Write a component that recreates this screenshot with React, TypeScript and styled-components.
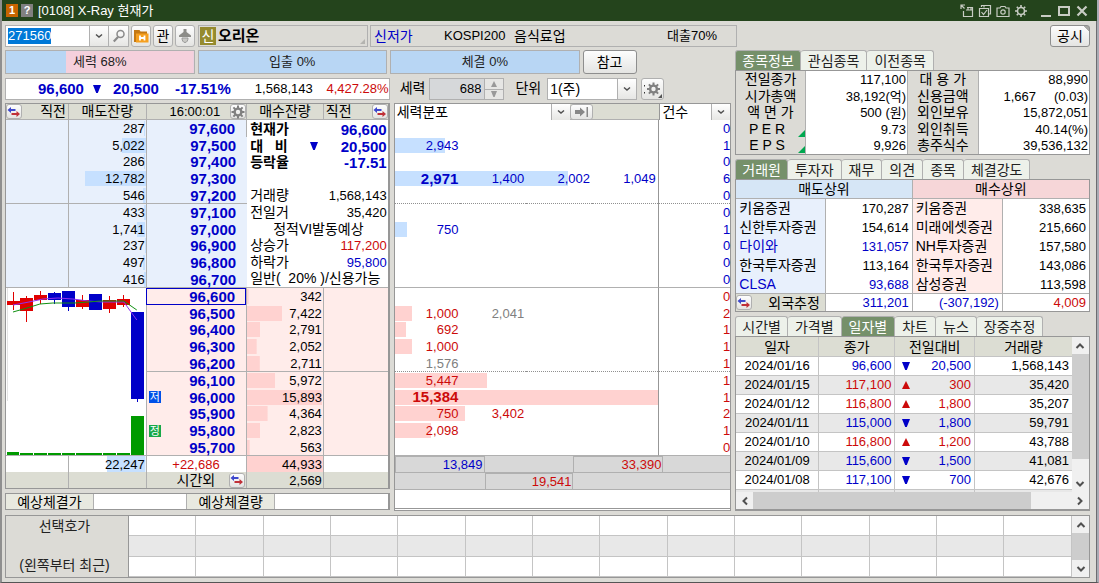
import React, { useEffect, useRef } from 'react';
import styled, { createGlobalStyle, css } from 'styled-components';

const c = {
  title: '#24441c',
  bg: '#dcdbd6',
  head: '#dcddd3',
  line: '#b0b0b0',
  edge: '#979797',
  blue: '#0000c8',
  red: '#cc0a0a',
  gray: '#808080',
  sell: '#e8f0fc',
  sellBar: '#c6e0ff',
  buy: '#ffecea',
  buyBar: '#ffd2d0',
  tab: '#75906a',
};

type Tone = 'blue' | 'red' | 'gray' | 'black';
const toneOf = (t?: Tone) => (t === 'blue' ? c.blue : t === 'red' ? c.red : t === 'gray' ? c.gray : '#000');

const Global = createGlobalStyle`
  * { box-sizing: border-box; }
  body { margin: 0; background: ${c.bg}; }
  body, button, input, select, table {
    font-family: "Liberation Sans", "Noto Sans CJK KR", sans-serif;
    font-size: 13px;
    line-height: 16px;
    color: #000;
  }
  button, input, select { margin: 0; padding: 0; }
`;

/* ---------- window ---------- */
const Window = styled.div`
  min-height: 100vh;
  min-width: 1000px;
  display: flex;
  flex-direction: column;
  background: ${c.bg};
  border-left: 2px solid #8f8f8f;
  border-right: 2px solid #a9abb4;
  border-bottom: 1px solid #555;
`;
const TitleBar = styled.header`
  display: flex;
  align-items: center;
  height: 21px;
  padding: 0 8px 0 4px;
  gap: 3px;
  background: ${c.title};
  color: #fff;
`;
const TitleBadge = styled.span<{ $bg: string }>`
  width: 12px;
  height: 13px;
  background: ${p => p.$bg};
  color: #fff;
  font-weight: bold;
  font-size: 11px;
  line-height: 13px;
  text-align: center;
`;
const TitleText = styled.h1`
  margin: 0 auto 0 2px;
  font-size: 13px;
  font-weight: normal;
`;
const TitleButton = styled.button`
  display: flex;
  align-items: center;
  justify-content: center;
  width: 15px;
  height: 16px;
  border: 0;
  background: none;
  color: #c8ccc4;
`;
const TitleGap = styled.span`
  width: 4px;
`;
const Body = styled.main`
  flex: 1;
  display: flex;
  flex-direction: column;
  padding: 4px 6px 3px 3px;
  border-right: 1px solid #6c6c70;
`;
const face = css`
  border: 1px solid ${c.line};
  background: linear-gradient(#fdfdfd, #e4e4e2);
  border-radius: 3px;
`;
const ToolBar = styled.div`
  display: flex;
  gap: 2px;
  height: 22px;
  margin-bottom: 3px;
`;
const FieldBox = styled.div<{ $w: number }>`
  display: flex;
  width: ${p => p.$w}px;
  border: 1px solid ${c.line};
  background: #fff;
`;
const CodeInput = styled.input`
  flex: 1;
  min-width: 0;
  border: 0;
  padding-left: 2px;
  outline: none;
  font-size: 13px;
  caret-color: #f08020;
  &::selection { background: #0078d7; color: #fff; }
`;
const FieldEnd = styled.button<{ $w?: number }>`
  display: flex;
  align-items: center;
  justify-content: center;
  width: ${p => p.$w ?? 19}px;
  border: 0;
  border-left: 1px solid ${c.line};
  background: linear-gradient(#fff, #e6e6e4);
`;
const ToolButton = styled.button<{ $wide?: boolean }>`
  ${face};
  display: flex;
  align-items: center;
  justify-content: center;
  width: ${p => (p.$wide ? 23 : 20)}px;
  font-size: 14px;
`;
const Strip = styled.div<{ $w: number; $first?: boolean }>`
  display: flex;
  align-items: center;
  width: ${p => p.$w}px;
  margin-left: ${p => (p.$first ? 1 : 0)}px;
  border: 1px solid ${c.line};
`;
const Fold = styled.span`
  align-self: flex-end;
  margin: 0 2px 2px 0;
  border-left: 5px solid transparent;
  border-bottom: 5px solid #b4b4b0;
`;
const NewMark = styled.span`
  width: 16px;
  height: 18px;
  margin: 0 2px 0 1px;
  background: #958a2e;
  color: #fff;
  font-size: 14px;
  line-height: 18px;
  text-align: center;
`;
const StockName = styled.strong`
  flex: 1;
  font-size: 15px;
`;
const Ko = styled.span<{ $tone?: Tone }>`
  font-size: 14px;
  color: ${p => toneOf(p.$tone)};
`;
const StripCell = styled.span<{ $w?: number }>`
  padding-left: 3px;
  ${p => (p.$w ? `width: ${p.$w}px;` : 'margin-left: auto; padding-right: 19px;')}
`;
const PushButton = styled.button<{ $w: number; $end?: boolean }>`
  ${face};
  border-color: #8e8e8e;
  width: ${p => p.$w}px;
  font-size: 14px;
  ${p => p.$end && `
    margin-left: auto;
    background: linear-gradient(225deg, #a8a8a4 4px, transparent 4px), linear-gradient(#fdfdfd, #e4e4e2);
  `}
`;

/* ---------- main columns ---------- */
const Columns = styled.div`
  display: grid;
  grid-template-columns: minmax(0, 727fr) minmax(0, 355fr);
  gap: 4px;
`;
const Trading = styled.section`
  display: grid;
  grid-template-columns: minmax(0, 385fr) minmax(0, 338fr);
  grid-template-rows: auto auto 1fr;
  column-gap: 4px;
`;
const GaugeRow = styled.div`
  grid-column: 1 / -1;
  display: grid;
  grid-template-columns: 190fr 190fr 190fr 54px 92fr;
  column-gap: 3px;
  height: 24px;
  margin-bottom: 4px;
`;
const Gauge = styled.div`
  border: 1px solid ${c.line};
  background-color: #b8d6f4;
  background-repeat: no-repeat;
  background-position: right;
  background-image: linear-gradient(#f5d0dc, #f5d0dc);
  line-height: 21px;
  text-align: center;
  color: #222;
`;
const Quote = styled.div`
  display: grid;
  grid-template-columns: 78fr 26fr 49fr 72fr 82fr 76fr;
  align-items: center;
  height: 22px;
  margin-bottom: 3px;
  border: 1px solid ${c.line};
  background: #fff;
  text-align: right;
  white-space: nowrap;
`;
const Num = styled.span<{ $tone?: Tone; $bold?: boolean }>`
  color: ${p => toneOf(p.$tone)};
  ${p => p.$bold && 'font-weight: bold; font-size: 15px;'}
`;
const Center = styled.span`
  display: flex;
  justify-content: center;
`;
const Controls = styled.div`
  display: flex;
  height: 22px;
  padding-left: 6px;
  gap: 4px;
`;
const ControlLabel = styled.label<{ $gap?: boolean }>`
  font-size: 14px;
  line-height: 20px;
  ${p => p.$gap && 'margin: 0 2px 0 7px;'}
`;
const SpinBox = styled.div`
  display: flex;
  width: 75px;
  border: 1px solid ${c.line};
  background: #d6d8da;
`;
const SpinInput = styled.input`
  flex: 1;
  min-width: 0;
  border: 0;
  padding-right: 3px;
  background: none;
  text-align: right;
`;
const SpinButtons = styled.span`
  display: grid;
  width: 19px;
  border-left: 1px solid ${c.line};
`;
const SpinButton = styled.button`
  display: flex;
  align-items: center;
  justify-content: center;
  border: 0;
  background: #e6e6e4;
  & + & { border-top: 1px solid ${c.line}; }
`;
const Select = styled.select`
  flex: 1;
  min-width: 0;
  appearance: none;
  border: 0;
  padding-left: 2px;
  background: #fff;
  font-size: 14px;
`;

/* ---------- order book ---------- */
const BookWrap = styled.div`
  display: flex;
  flex-direction: column;
  justify-content: space-between;
  padding-bottom: 1px;
`;
const Book = styled.table`
  width: 100%;
  table-layout: fixed;
  border-spacing: 0;
  border: 1px solid ${c.edge};
  border-right-width: 2px;
  td, th { padding: 0; font-weight: normal; white-space: nowrap; }
`;
const BookHead = styled.th<{ $align?: string }>`
  height: 16px;
  background: ${c.head};
  border-bottom: 1px solid ${c.line};
  border-right: 1px solid ${c.line};
  font-size: 14px;
  line-height: 15px;
  text-align: ${p => p.$align ?? 'center'};
  &:last-child { border-right: 0; }
`;
const HeadFlex = styled.div`
  display: flex;
  justify-content: space-between;
  align-items: center;
  height: 15px;
  padding: 0 2px 0 0;
`;
const HeadFlexEnd = styled(HeadFlex)`
  padding: 0 0 0 2px;
`;
const HeadFlexTight = styled(HeadFlex)`
  padding: 0;
`;
const Clock = styled.span`
  margin-left: auto;
  padding-right: 10px;
  font-size: 13px;
`;
const MiniButton = styled.button`
  ${face};
  display: flex;
  align-items: center;
  justify-content: center;
  width: 16px;
  height: 15px;
`;
const Cell = styled.td<{ $side?: 'sell' | 'buy'; $h?: number; $end?: boolean }>`
  height: ${p => p.$h ?? 17}px;
  line-height: 15px;
  text-align: right;
  background-color: ${p => (p.$side === 'sell' ? c.sell : c.buy)};
  background-image: ${p =>
    p.$side === 'sell'
      ? `linear-gradient(${c.sellBar}, ${c.sellBar})`
      : `linear-gradient(${c.buyBar}, ${c.buyBar})`};
  background-size: 0 0;
  background-repeat: no-repeat;
  background-position: ${p => (p.$side === 'sell' ? 'right' : 'left')} center;
  border-right: 1px solid ${c.line};
  border-bottom: ${p => (p.$end ? `1px solid ${c.line}` : '0')};
  &:last-child { border-right: 0; }
  && { padding-right: 1px; }
`;
const PriceBox = styled.div<{ $current?: boolean }>`
  display: flex;
  align-items: center;
  height: 15px;
  padding: 0 10px 0 2px;
  color: ${c.blue};
  font-size: 15px;
  font-weight: bold;
  ${p => p.$current && `outline: 1px solid ${c.blue};`}
`;
const Price = styled.span`
  margin-left: auto;
`;
const Mark = styled.span<{ $bg: string }>`
  width: 12px;
  height: 12px;
  background: ${p => p.$bg};
  color: #fff;
  font-size: 11px;
  font-weight: normal;
  line-height: 12px;
  text-align: center;
`;
const SpanCell = styled.td<{ $right?: boolean }>`
  background: #fff;
  vertical-align: top;
  border-bottom: 1px solid ${c.line};
  border-right: ${p => (p.$right ? '0' : `1px solid ${c.line}`)};
  svg { display: block; }
`;
const Info = styled.dl`
  display: grid;
  grid-template-rows: 17px 16px 16px 17px 17px 17px 16px 17px 16px 17px;
  margin: 0;
  padding: 1px 1px 0 3px;
`;
const InfoRow = styled.div<{ $bold?: boolean; $center?: boolean }>`
  display: flex;
  align-items: center;
  justify-content: ${p => (p.$center ? 'center' : 'space-between')};
  font-weight: ${p => (p.$bold ? 'bold' : 'normal')};
  line-height: 15px;
  dt { font-size: 14px; white-space: pre; }
  dd { margin: 0; font-size: ${p => (p.$bold ? 15 : 13)}px; }
`;
const FootCell = styled.td<{ $gray?: boolean; $fill?: boolean; $center?: boolean; $tone?: Tone }>`
  height: 16px;
  line-height: 15px;
  text-align: ${p => (p.$center ? 'center' : 'right')};
  color: ${p => toneOf(p.$tone)};
  background-color: ${p => (p.$gray ? c.head : p.$fill ? c.buyBar : '#fff')};
  border-right: 1px solid ${c.line};
  &:last-child { border-right: 0; }
  && { padding-right: 1px; }
`;
const SellTotal = styled(FootCell)`
  background-image: linear-gradient(${c.sellBar}, ${c.sellBar});
  background-repeat: no-repeat;
  background-position: right;
  background-size: 50% 100%;
`;
const AfterHours = styled.div`
  display: flex;
  align-items: center;
  justify-content: flex-end;
  gap: 14px;
  height: 16px;
  font-size: 14px;
`;
const Expected = styled.div`
  display: grid;
  grid-template-columns: 88fr 94fr 88fr 113fr;
  height: 17px;
  border: 1px solid ${c.edge};
  border-right-width: 2px;
  background: #fff;
  font-size: 14px;
  line-height: 16px;
  overflow: hidden;
`;
const ExpectedLabel = styled.span`
  background: #e8e9e0;
  border-right: 1px solid ${c.line};
  text-align: center;
`;
const ExpectedValue = styled.span`
  border-right: 1px solid ${c.line};
  &:last-child { border: 0; }
`;

/* ---------- force distribution ---------- */
const ForcePanel = styled.div`
  border: 1px solid ${c.edge};
  border-bottom: 3px double ${c.edge};
  background: #fff;
`;
const ForceHead = styled.div`
  display: grid;
  grid-template-columns: 176fr 23px 66fr 71fr;
  height: 16px;
  background: ${c.head};
  border-bottom: 1px solid ${c.line};
`;
const HeadSelect = styled.div<{ $last?: boolean }>`
  display: flex;
  min-width: 0;
  grid-column: ${p => (p.$last ? 4 : 'auto')};
  border-left: ${p => (p.$last ? `1px solid ${c.edge}` : '0')};
`;
const ForceTable = styled.table`
  width: 100%;
  table-layout: fixed;
  border-spacing: 0;
`;
const ForceRow = styled.tr<{ $h: number; $rule?: 'solid' | 'dotted' }>`
  background-repeat: no-repeat;
  background-position: left center;
  td {
    height: ${p => p.$h}px;
    padding: 0 2px 0 0;
    line-height: 15px;
    text-align: right;
    border-bottom: ${p => (p.$rule ? `1px ${p.$rule} ${p.$rule === 'dotted' ? '#909090' : c.line}` : '0')};
  }
  td:last-child { border-left: 1px solid ${c.edge}; padding: 0; background: #fff; }
`;
const ForceFoot = styled.div<{ $cols: string }>`
  display: grid;
  grid-template-columns: ${p => p.$cols};
  height: 17px;
  background: #d8d8d8;
  border-bottom: 1px solid ${c.line};
  line-height: 16px;
  text-align: right;
`;
const ForceSum = styled.span<{ $tone: Tone }>`
  border: 1px solid ${c.line};
  padding-right: 1px;
  line-height: 15px;
  color: ${p => toneOf(p.$tone)};
`;

/* ---------- right column ---------- */
const Side = styled.section`
  display: flex;
  flex-direction: column;
  gap: 4px;
`;
const TabRow = styled.div`
  display: flex;
  height: 20px;
`;
const Tab = styled.button<{ $on?: boolean }>`
  padding: 0 6px;
  border: 1px solid ${c.line};
  border-bottom: 0;
  border-radius: 3px 3px 0 0;
  background: ${p => (p.$on ? c.tab : '#edf1ea')};
  color: ${p => (p.$on ? '#fff' : '#222')};
  font-size: 14px;
  line-height: 18px;
  white-space: nowrap;
  & + & { border-left: 0; padding: 0 7px; }
`;
const DataTable = styled.table`
  width: 100%;
  table-layout: fixed;
  border-spacing: 0;
  border: 1px solid ${c.edge};
  background: #fff;
  th, td { padding: 0; font-weight: normal; white-space: nowrap; overflow: hidden; }
`;
const FactRow = styled.tr<{ $h: number }>`
  th, td { height: ${p => p.$h}px; line-height: 15px; }
`;
const FactLabel = styled.th`
  background: ${c.bg};
  border-right: 1px solid ${c.line};
  font-size: 14px;
  white-space: pre !important;
`;
const Corner = styled.span`
  float: right;
  width: 0;
  height: 0;
  margin-top: 8px;
  border-left: 7px solid transparent;
  border-bottom: 7px solid #00a850;
`;
const FactValue = styled.td`
  text-align: right;
  white-space: pre !important;
  border-right: 1px solid ${c.line};
  && { padding-right: 1px; }
  &:last-child { border-right: 0; }
`;
const RankHead = styled.th<{ $bg: string }>`
  height: 19px;
  background: ${p => p.$bg};
  border-bottom: 1px solid ${c.line};
  border-right: 1px solid ${c.line};
  font-size: 14px;
  line-height: 18px;
  &:last-child { border-right: 0; }
`;
const Broker = styled.th<{ $bg: string; $tone?: Tone; $last?: boolean }>`
  height: 19px;
  background: ${p => p.$bg};
  color: ${p => toneOf(p.$tone)};
  font-size: 14px;
  line-height: 17px;
  text-align: left;
  border-right: 1px solid ${c.line};
  border-bottom: ${p => (p.$last ? `1px solid ${c.line}` : '0')};
  && { padding-left: 3px; }
`;
const Volume = styled.td<{ $tone?: Tone; $last?: boolean; $h?: number }>`
  height: ${p => p.$h ?? 19}px;
  color: ${p => toneOf(p.$tone)};
  line-height: 17px;
  text-align: right;
  border-right: 1px solid ${c.line};
  border-bottom: ${p => (p.$last ? `1px solid ${c.line}` : '0')};
  && { padding-right: 3px; }
  &:last-child { border-right: 0; }
`;
const ForeignHead = styled.th`
  height: 17px;
  background: ${c.head};
  border-right: 1px solid ${c.line};
  font-size: 14px;
`;
const ForeignFlex = styled.div`
  display: flex;
  align-items: center;
  justify-content: space-between;
  height: 17px;
  padding-right: 5px;
`;
const DailyBox = styled.div`
  display: grid;
  grid-template-columns: minmax(0, 1fr) 17px;
  height: 175px;
  border: 1px solid ${c.edge};
  border-bottom-width: 2px;
  background: #f0f0f0;
`;
const DailyView = styled.div`
  height: 155px;
  overflow: hidden;
`;
const DailyTable = styled(DataTable)`
  border: 0;
  background: #fff;
  th, td { border-right: 1px solid #c4c4c4; border-bottom: 1px solid #c4c4c4; height: 19px; line-height: 18px; }
  th { background: ${c.head}; font-size: 14px; height: 20px; }
  tbody tr:nth-child(even) { background: #e8e8e8; }
  td { text-align: right; }
  td:first-child { text-align: center; }
  && td:nth-child(2), && td:nth-child(4) { padding-right: 3px; }
  th:last-child, td:last-child { border-right: 0; }
`;
const Change = styled.div<{ $up: boolean }>`
  display: flex;
  align-items: center;
  justify-content: space-between;
  height: 18px;
  padding: 0 3px 0 7px;
  color: ${p => (p.$up ? c.red : c.blue)};
`;
const Bar = styled.div<{ $horizontal?: boolean }>`
  display: flex;
  flex-direction: ${p => (p.$horizontal ? 'row' : 'column')};
  background: #f0f0f0;
  ${p => p.$horizontal && 'grid-column: 1 / -1; height: 17px;'}
`;
const BarButton = styled.button`
  display: flex;
  align-items: center;
  justify-content: center;
  flex: none;
  width: 17px;
  height: 17px;
  border: 0;
  background: none;
`;
const Track = styled.span`
  flex: 1;
  display: flex;
  flex-direction: inherit;
`;
const Thumb = styled.span`
  background: #cdcdcd;
`;

/* ---------- bottom ---------- */
const Recent = styled.section`
  display: grid;
  grid-template-columns: 123px minmax(0, 1fr) 17px;
  height: 63px;
  margin-top: 4px;
  border: 1px solid ${c.edge};
`;
const RecentLabel = styled.div`
  display: flex;
  flex-direction: column;
  justify-content: space-between;
  padding: 2px 5px 4px 0;
  border-right: 1px solid ${c.edge};
  font-size: 14px;
  text-align: center;
  color: #222;
`;
const RecentGrid = styled.table`
  width: 100%;
  table-layout: fixed;
  border-spacing: 0;
  background: #fff;
  td { height: 20px; padding: 0; border-right: 1px solid #c4c4c4; border-bottom: 1px solid #c4c4c4; }
  tr:nth-child(2) { background: #e8e8e8; }
`;

/* ---------- icons ---------- */
const Tri = ({ up, size = 8, color }: { up?: boolean; size?: number; color?: string }) => (
  <svg width={size} height={size} viewBox="0 0 8 8" fill={color ?? 'currentColor'} aria-hidden>
    <path d={up ? 'M4 0L8 8H0Z' : 'M0 0H8L4.8 8H3.2Z'} />
  </svg>
);
const Chevron = ({ dir = 'down', big }: { dir?: 'down' | 'up' | 'left' | 'right'; big?: boolean }) => {
  const turn = { down: 0, left: 90, up: 180, right: 270 }[dir];
  return (
    <svg width="10" height="10" viewBox="0 0 10 10" fill="none" stroke="#505050" strokeWidth={big ? 2 : 1.5} aria-hidden>
      <path d={big ? 'M1.5 3L5 6.5L8.5 3' : 'M2 3.5L5 6L8 3.5'} transform={`rotate(${turn} 5 5)`} />
    </svg>
  );
};
const Swap = () => (
  <svg width="14" height="12" viewBox="0 0 14 12" aria-hidden>
    <path d="M0.5 4L4 1V3H8.5V5H4V7Z" fill="#3f48cc" />
    <path d="M13 8L9.500 5V7H4.500V9H9.500V11Z" fill="#c03038" />
  </svg>
);
const Gear = ({ size = 14, color = '#808080' }: { size?: number; color?: string }) => (
  <svg width={size} height={size} viewBox="0 0 14 14" fill="none" stroke={color} aria-hidden>
    <circle cx="7" cy="7" r="3.400" strokeWidth="2.400" />
    <path d="M7 0.500V3M7 11V13.500M0.500 7H3M11 7H13.500M2.400 2.400L4.200 4.200M9.800 9.800L11.600 11.600M2.400 11.600L4.200 9.800M9.800 4.200L11.600 2.400" strokeWidth="2" />
  </svg>
);
const GearMenu = () => (
  <svg width="20" height="18" viewBox="0 0 20 18" fill="none" stroke="#808080" aria-hidden>
    <circle cx="10.500" cy="9" r="3.400" strokeWidth="2.400" />
    <path d="M10.500 2.500V5M10.500 13V15.500M4 9H6.500M14.500 9H17M5.900 4.400L7.700 6.200M13.300 11.800L15.100 13.600M5.900 13.600L7.700 11.800M13.300 6.200L15.100 4.400" strokeWidth="2" />
    <path d="M1 5H2V6.500H1ZM1 12H2V13.500H1Z" fill="#333" stroke="none" />
    <path d="M19 14V18H15Z" fill="#555" stroke="none" />
  </svg>
);
const Magnifier = () => (
  <svg width="14" height="14" viewBox="0 0 14 14" fill="none" stroke="#8a8a8a" aria-hidden>
    <circle cx="8.500" cy="5" r="3.500" strokeWidth="1.500" />
    <path d="M6 8L1.800 12.600" strokeWidth="2.200" />
  </svg>
);
const Folder = () => (
  <svg width="16" height="16" viewBox="0 0 16 16" aria-hidden>
    <path d="M1 2H6.500L7.500 3.500H14V14H1Z" fill="#c47812" />
    <path d="M3 5.500H15.500V14.500H3Z" fill="#f59f1e" />
    <path d="M7 7.500V12.500M11.500 7.500V12.500M7 10H11.500" stroke="#fff" strokeWidth="1.800" />
  </svg>
);
const Lamp = () => (
  <svg width="14" height="16" viewBox="0 0 14 16" aria-hidden>
    <path d="M5.500 1H8.500V4L13 7.500V9H1V7.500L5.500 4Z" fill="#8c8c88" />
    <path d="M4 10H10C10 12.500 8.800 14.500 7 14.500S4 12.500 4 10Z" fill="#c9c9c5" stroke="#999" />
  </svg>
);
const ToEnd = () => (
  <svg width="16" height="12" viewBox="0 0 16 12" fill="#888" aria-hidden>
    <path d="M1 4H6V1.500L11 6L6 10.500V8H1Z" />
    <path d="M12.500 1H14V11H12.500Z" />
  </svg>
);
const Line = ({ children }: { children: React.ReactNode }) => (
  <svg width="14" height="14" viewBox="0 0 14 14" fill="none" stroke="currentColor" strokeWidth="1.200" aria-hidden>
    {children}
  </svg>
);

/* ---------- data ---------- */
const sells: [string, string][] = [
  ['287', '97,600'], ['5,022', '97,500'], ['286', '97,400'], ['12,782', '97,300'], ['546', '97,200'],
  ['433', '97,100'], ['1,741', '97,000'], ['237', '96,900'], ['497', '96,800'], ['416', '96,700'],
];
const buys: [string, string][] = [
  ['96,600', '342'], ['96,500', '7,422'], ['96,400', '2,791'], ['96,300', '2,052'], ['96,200', '2,711'],
  ['96,100', '5,972'], ['96,000', '15,893'], ['95,900', '4,364'], ['95,800', '2,823'], ['95,700', '563'],
];
const marks: Record<string, [string, string]> = { '96,000': ['저', '#0050e8'], '95,800': ['정', '#18a848'] };
const MAX = 16100;
const share = (v: string) => `${(parseInt(v.replace(',', ''), 10) / MAX) * 100}% 15px`;
const rowHeight = (i: number) => (i % 5 === 1 ? 16 : 17);

const force: { n: string[]; cnt: string; bar?: number; strong?: boolean; muted?: number[] }[] = [
  { n: [], cnt: '0' }, { n: ['2,943'], cnt: '1', bar: 50 }, { n: [], cnt: '0' },
  { n: ['2,971', '1,400', '2,002', '1,049'], cnt: '6', bar: 174, strong: true }, { n: [], cnt: '0' },
  { n: [], cnt: '0' }, { n: ['750'], cnt: '1', bar: 12 }, { n: [], cnt: '0' }, { n: [], cnt: '0' }, { n: [], cnt: '0' },
  { n: [], cnt: '0' }, { n: ['1,000', '2,041'], cnt: '2', bar: 17, muted: [1] }, { n: ['692'], cnt: '1', bar: 11 },
  { n: ['1,000'], cnt: '1', bar: 17 }, { n: ['1,576'], cnt: '1', muted: [0] },
  { n: ['5,447'], cnt: '1', bar: 93 }, { n: ['15,384'], cnt: '1', bar: 264, strong: true },
  { n: ['750', '3,402'], cnt: '2', bar: 71 }, { n: ['2,098'], cnt: '1', bar: 36 }, { n: [], cnt: '0' },
];

const facts = [
  ['전일종가', '117,100', '대 용 가', '88,990'],
  ['시가총액', '38,192(억)', '신용금액', '1,667     (0.03)'],
  ['액 면 가', '500 (원)', '외인보유', '15,872,051'],
  ['P E R', '9.73', '외인취득', '40.14(%)'],
  ['E P S', '9,926', '총주식수', '39,536,132'],
];
const brokers: [string, string, string, string, boolean][] = [
  ['키움증권', '170,287', '키움증권', '338,635', false],
  ['신한투자증권', '154,614', '미래에셋증권', '215,660', false],
  ['다이와', '131,057', 'NH투자증권', '157,580', true],
  ['한국투자증권', '113,164', '한국투자증권', '143,086', false],
  ['CLSA', '93,688', '삼성증권', '113,598', true],
];
const days: [string, string, boolean, string, string, Tone][] = [
  ['2024/01/16', '96,600', false, '20,500', '1,568,143', 'blue'],
  ['2024/01/15', '117,100', true, '300', '35,420', 'red'],
  ['2024/01/12', '116,800', true, '1,800', '35,207', 'red'],
  ['2024/01/11', '115,000', false, '1,800', '59,791', 'blue'],
  ['2024/01/10', '116,800', true, '1,200', '43,788', 'red'],
  ['2024/01/09', '115,600', false, '1,500', '41,081', 'blue'],
  ['2024/01/08', '117,100', false, '700', '42,676', 'blue'],
];

// x, body top, body bottom, wick top, wick bottom, rising
const candles: [number, number, number, number, number, boolean][] = [
  [1, 13, 17, 4, 22, true], [14, 10, 23, 8, 34, true], [28, 7, 12, 3, 16, true], [42, 5, 12, 4, 16, false],
  [56, 3, 19, 3, 23, false], [70, 12, 19, 7, 21, true], [83, 6, 22, 6, 22, false], [97, 12, 21, 8, 25, true],
  [111, 11, 17, 7, 19, true], [125, 24, 111, 24, 114, false],
];
const CandleChart = () => (
  <svg width="100%" height="167" viewBox="0 0 140 167" preserveAspectRatio="none" shapeRendering="crispEdges" role="img" aria-label="일봉">
    <path d="M1.500 0V113" stroke="#e4e4e4" />
    {candles.map(([x, t, b, wt, wb, up], i) => (
      <g key={x} fill={up ? '#e00000' : '#0000c8'}>
        <rect x={x + 6} y={wt} width="1" height={wb - wt} />
        <rect x={x} y={t} width="13" height={b - t} />
        <rect x={x} y={i === 9 ? 128 : i === 0 ? 164 : 165} width={i === 0 ? 12 : 13} height={i === 9 ? 39 : i === 0 ? 3 : 2} fill="#009a00" />
      </g>
    ))}
    <g fill="none" strokeWidth="1">
      <polyline stroke="#9030f0" points="7,17 23,14 37,11 52,10 67,11 82,13 97,14 118,14 131,32" />
      <polyline stroke="#109010" points="7,24 21,20 34,16 47,15 69,15 82,14 94,13 118,13 131,22" />
    </g>
  </svg>
);

const Tabs = ({ items, on }: { items: string[]; on: number }) => (
  <TabRow role="tablist">
    {items.map((t, i) => (
      <Tab key={t} role="tab" aria-selected={i === on} $on={i === on}>{t}</Tab>
    ))}
  </TabRow>
);

const Scroll = ({ horizontal, thumb }: { horizontal?: boolean; thumb: number }) => (
  <Bar $horizontal={horizontal}>
    <BarButton aria-label="이전"><Chevron dir={horizontal ? 'left' : 'up'} big /></BarButton>
    <Track><Thumb style={{ flexBasis: `${thumb}%` }} /></Track>
    <BarButton aria-label="다음"><Chevron dir={horizontal ? 'right' : 'down'} big /></BarButton>
  </Bar>
);

const PriceCell = ({ price, side, i, end }: { price: string; side: 'sell' | 'buy'; i: number; end: boolean }) => (
  <Cell $side={side} $h={rowHeight(i)} $end={end}>
    <PriceBox $current={price === '96,600'}>
      {marks[price] && <Mark $bg={marks[price][1]}>{marks[price][0]}</Mark>}
      <Price>{price}</Price>
    </PriceBox>
  </Cell>
);

const OrderBook = () => (
  <Book>
    <colgroup>
      <col style={{ width: '16.5%' }} />
      <col style={{ width: '20.4%' }} />
      <col style={{ width: '26.3%' }} />
      <col style={{ width: '20.1%' }} />
      <col />
    </colgroup>
    <thead>
      <tr>
        <BookHead><HeadFlex><MiniButton aria-label="전환"><Swap /></MiniButton>직전</HeadFlex></BookHead>
        <BookHead>매도잔량</BookHead>
        <BookHead><HeadFlexTight><Clock>16:00:01</Clock><MiniButton aria-label="설정"><Gear /></MiniButton></HeadFlexTight></BookHead>
        <BookHead>매수잔량</BookHead>
        <BookHead><HeadFlexEnd>직전<MiniButton aria-label="전환"><Swap /></MiniButton></HeadFlexEnd></BookHead>
      </tr>
    </thead>
    <tbody>
      {sells.map(([qty, price], i) => (
        <tr key={price}>
          <Cell $side="sell" $h={rowHeight(i)} $end={i % 5 === 4} />
          <Cell $side="sell" $h={rowHeight(i)} $end={i % 5 === 4} style={{ backgroundSize: share(qty) }}>{qty}</Cell>
          <PriceCell price={price} side="sell" i={i} end={i % 5 === 4} />
          {i === 0 && (
            <SpanCell colSpan={2} rowSpan={10} $right>
              <Info>
                <InfoRow $bold><dt>현재가</dt><dd><Num $tone="blue">96,600</Num></dd></InfoRow>
                <InfoRow $bold><dt>대   비</dt><Tri color={c.blue} /><dd><Num $tone="blue">20,500</Num></dd></InfoRow>
                <InfoRow $bold><dt>등락율</dt><dd><Num $tone="blue">-17.51</Num></dd></InfoRow>
                <InfoRow />
                <InfoRow><dt>거래량</dt><dd>1,568,143</dd></InfoRow>
                <InfoRow><dt>전일거</dt><dd>35,420</dd></InfoRow>
                <InfoRow $center><dt>정적VI발동예상</dt></InfoRow>
                <InfoRow><dt>상승가</dt><dd><Num $tone="red">117,200</Num></dd></InfoRow>
                <InfoRow><dt>하락가</dt><dd><Num $tone="blue">95,800</Num></dd></InfoRow>
                <InfoRow><dt>일반(  20% )/신용가능</dt></InfoRow>
              </Info>
            </SpanCell>
          )}
        </tr>
      ))}
      {buys.map(([price, qty], i) => (
        <tr key={price}>
          {i === 0 && <SpanCell colSpan={2} rowSpan={10}><CandleChart /></SpanCell>}
          <PriceCell price={price} side="buy" i={i} end={i % 5 === 4} />
          <Cell $side="buy" $h={rowHeight(i)} $end={i % 5 === 4} style={{ backgroundSize: share(qty) }}>{qty}</Cell>
          <Cell $side="buy" $h={rowHeight(i)} $end={i % 5 === 4} />
        </tr>
      ))}
    </tbody>
    <tfoot>
      <tr>
        <FootCell />
        <SellTotal>22,247</SellTotal>
        <FootCell $center $tone="red">+22,686</FootCell>
        <FootCell $fill>44,933</FootCell>
        <FootCell />
      </tr>
      <tr>
        <FootCell $gray />
        <FootCell $gray />
        <FootCell $gray><AfterHours>시간외<MiniButton aria-label="전환"><Swap /></MiniButton></AfterHours></FootCell>
        <FootCell $gray>2,569</FootCell>
        <FootCell $gray />
      </tr>
    </tfoot>
  </Book>
);

const ForceMap = () => (
  <ForcePanel>
    <ForceHead>
      <HeadSelect>
        <Select aria-label="분포 종류"><option>세력분포</option></Select>
        <FieldEnd aria-label="열기"><Chevron /></FieldEnd>
      </HeadSelect>
      <ToolButton aria-label="끝으로" $wide><ToEnd /></ToolButton>
      <HeadSelect $last>
        <Select aria-label="표시 값"><option>건수</option></Select>
        <FieldEnd aria-label="열기"><Chevron /></FieldEnd>
      </HeadSelect>
    </ForceHead>
    <ForceTable>
      <colgroup>
        {[0, 1, 2, 3].map(k => <col key={k} style={{ width: '19.6%' }} />)}
        <col />
      </colgroup>
      <tbody>
        {force.map((r, i) => {
          const tone: Tone = i < 10 ? 'blue' : 'red';
          const fill = i < 10 ? c.sellBar : c.buyBar;
          return (
            <ForceRow
              key={i}
              $h={rowHeight(i)}
              $rule={i % 10 === 4 ? 'dotted' : i % 10 === 9 ? 'solid' : undefined}
              style={r.bar ? { backgroundImage: `linear-gradient(${fill}, ${fill})`, backgroundSize: `${(r.bar / 336) * 100}% 15px` } : undefined}
            >
              {[0, 1, 2, 3].map(k => (
                <td key={k}>
                  {r.n[k] && <Num $tone={r.muted?.includes(k) ? 'gray' : tone} $bold={r.strong && k === 0}>{r.n[k]}</Num>}
                </td>
              ))}
              <td><Num $tone={tone}>{r.cnt}</Num></td>
            </ForceRow>
          );
        })}
      </tbody>
    </ForceTable>
    <ForceFoot $cols="90fr 89fr 90fr 67fr">
      <ForceSum $tone="blue">13,849</ForceSum>
      <span />
      <ForceSum $tone="red">33,390</ForceSum>
    </ForceFoot>
    <ForceFoot $cols="90fr 89fr 90fr 67fr">
      <span />
      <ForceSum $tone="red">19,541</ForceSum>
    </ForceFoot>
  </ForcePanel>
);

export default function App() {
  const code = useRef<HTMLInputElement>(null);
  useEffect(() => {
    code.current?.focus();
    code.current?.select();
  }, []);

  return (
    <Window>
      <Global />
      <TitleBar>
        <TitleBadge $bg="#c86400">1</TitleBadge>
        <TitleBadge $bg="#808080">?</TitleBadge>
        <TitleText>[0108] X-Ray 현재가</TitleText>
        <TitleButton aria-label="분리"><Line><path d="M1 5V1H5M1 1L4.500 4.500M3.500 7V12.500H12.500V3.500H7M6 6H12.500M8 3V6M11 3V6" /></Line></TitleButton>
        <TitleButton aria-label="복사"><Line><path d="M3.500 3V1.500H12.500V10H11M1.500 4.500H10.500V12.500H1.500ZM3.500 8L5.500 10.500L9 6M6 3.500V1.500" /></Line></TitleButton>
        <TitleButton aria-label="화면 저장"><Line><path d="M1 4H4L5 2.500H9L10 4H13V12.500H1Z" /><circle cx="7" cy="8" r="2.200" /></Line></TitleButton>
        <TitleButton aria-label="설정"><Line><circle cx="7" cy="7" r="3.500" strokeWidth="1.600" /><path d="M7 1V3M7 11V13M1 7H3M11 7H13M2.800 2.800L4.200 4.200M9.800 9.800L11.200 11.200M2.800 11.200L4.200 9.800M9.800 4.200L11.200 2.800" strokeWidth="1.600" /></Line></TitleButton>
        <TitleGap />
        <TitleButton aria-label="최소화"><Line><path d="M2 12H12" strokeWidth="2" /></Line></TitleButton>
        <TitleButton aria-label="최대화"><Line><path d="M2 3H12V11H2Z" strokeWidth="2" /></Line></TitleButton>
        <TitleButton aria-label="닫기"><Line><path d="M2.500 2.500L11.500 11.500M11.500 2.500L2.500 11.500" strokeWidth="2.200" /></Line></TitleButton>
      </TitleBar>
      <Body>
        <ToolBar>
          <FieldBox $w={124}>
            <CodeInput ref={code} aria-label="종목코드" defaultValue="271560" />
            <FieldEnd aria-label="목록"><Chevron /></FieldEnd>
            <FieldEnd aria-label="검색" $w={20}><Magnifier /></FieldEnd>
          </FieldBox>
          <ToolButton aria-label="보유 종목"><Folder /></ToolButton>
          <ToolButton>관</ToolButton>
          <ToolButton aria-label="알림"><Lamp /></ToolButton>
          <Strip $w={170} $first>
            <NewMark>신</NewMark>
            <StockName>오리온</StockName>
            <Fold />
          </Strip>
          <Strip $w={367}>
            <StripCell $w={70}><Ko $tone="blue">신저가</Ko></StripCell>
            <StripCell $w={70}>KOSPI200</StripCell>
            <StripCell $w={80}><Ko>음식료업</Ko></StripCell>
            <StripCell>대출70%</StripCell>
          </Strip>
          <PushButton $w={40} $end>공시</PushButton>
        </ToolBar>

        <Columns>
          <Trading>
            <GaugeRow>
              <Gauge style={{ backgroundSize: '68% 100%' }}>세력 68%</Gauge>
              <Gauge style={{ backgroundSize: '0% 100%' }}>입출 0%</Gauge>
              <Gauge style={{ backgroundSize: '0% 100%' }}>체결 0%</Gauge>
              <PushButton $w={54}>참고</PushButton>
            </GaugeRow>
            <Quote>
              <Num $tone="blue" $bold>96,600</Num>
              <Center><Tri color={c.blue} /></Center>
              <Num $tone="blue" $bold>20,500</Num>
              <Num $tone="blue" $bold>-17.51%</Num>
              <Num>1,568,143</Num>
              <Num $tone="red">4,427.28%</Num>
            </Quote>
            <Controls>
              <ControlLabel htmlFor="force">세력</ControlLabel>
              <SpinBox>
                <SpinInput id="force" defaultValue="688" />
                <SpinButtons>
                  <SpinButton aria-label="증가"><Tri up size={6} color="#999" /></SpinButton>
                  <SpinButton aria-label="감소"><Tri size={6} color="#999" /></SpinButton>
                </SpinButtons>
              </SpinBox>
              <ControlLabel htmlFor="unit" $gap>단위</ControlLabel>
              <FieldBox $w={90}>
                <Select id="unit"><option>1(주)</option></Select>
                <FieldEnd aria-label="열기"><Chevron /></FieldEnd>
              </FieldBox>
              <ToolButton aria-label="설정" $wide><GearMenu /></ToolButton>
            </Controls>
            <BookWrap>
              <OrderBook />
              <Expected>
                <ExpectedLabel>예상체결가</ExpectedLabel>
                <ExpectedValue />
                <ExpectedLabel>예상체결량</ExpectedLabel>
                <ExpectedValue />
              </Expected>
            </BookWrap>
            <ForceMap />
          </Trading>

          <Side>
            <div>
              <Tabs items={['종목정보', '관심종목', '이전종목']} on={0} />
              <DataTable>
                <colgroup>
                  <col style={{ width: '19.7%' }} /><col style={{ width: '29%' }} /><col style={{ width: '20%' }} /><col />
                </colgroup>
                <tbody>
                  {facts.map((f, i) => (
                    <FactRow key={f[0]} $h={i % 2 ? 16 : 17}>
                      <FactLabel>{i > 2 && <Corner />}{f[0]}</FactLabel>
                      <FactValue>{f[1]}</FactValue>
                      <FactLabel>{f[2]}</FactLabel>
                      <FactValue>{f[3]}</FactValue>
                    </FactRow>
                  ))}
                </tbody>
              </DataTable>
            </div>
            <div>
              <Tabs items={['거래원', '투자자', '재무', '의견', '종목', '체결강도']} on={0} />
              <DataTable>
                <colgroup>
                  <col style={{ width: '25.4%' }} /><col style={{ width: '24.6%' }} /><col style={{ width: '25.6%' }} /><col />
                </colgroup>
                <thead>
                  <tr>
                    <RankHead colSpan={2} $bg="#d6e6f6">매도상위</RankHead>
                    <RankHead colSpan={2} $bg="#f6d6d8">매수상위</RankHead>
                  </tr>
                </thead>
                <tbody>
                  {brokers.map((b, i) => (
                    <tr key={b[0]}>
                      <Broker $bg={c.sell} $tone={b[4] ? 'blue' : 'black'} $last={i === 4}>{b[0]}</Broker>
                      <Volume $tone={b[4] ? 'blue' : 'black'} $last={i === 4}>{b[1]}</Volume>
                      <Broker $bg={c.buy} $last={i === 4}>{b[2]}</Broker>
                      <Volume $last={i === 4}>{b[3]}</Volume>
                    </tr>
                  ))}
                  <tr>
                    <ForeignHead><ForeignFlex><MiniButton aria-label="전환"><Swap /></MiniButton>외국추정</ForeignFlex></ForeignHead>
                    <Volume $h={17} $tone="blue">311,201</Volume>
                    <Volume $h={17} $tone="blue">(-307,192)</Volume>
                    <Volume $h={17} $tone="red">4,009</Volume>
                  </tr>
                </tbody>
              </DataTable>
            </div>
            <div>
              <Tabs items={['시간별', '가격별', '일자별', '차트', '뉴스', '장중추정']} on={2} />
              <DailyBox>
                <DailyView>
                  <DailyTable>
                    <colgroup>
                      <col style={{ width: '24.6%' }} /><col style={{ width: '22.8%' }} /><col style={{ width: '23.7%' }} /><col />
                    </colgroup>
                    <thead><tr><th>일자</th><th>종가</th><th>전일대비</th><th>거래량</th></tr></thead>
                    <tbody>
                      {days.map(([d, p, up, diff, vol, tone]) => (
                        <tr key={d}>
                          <td>{d}</td>
                          <td><Num $tone={tone}>{p}</Num></td>
                          <td><Change $up={up}><Tri up={up} />{diff}</Change></td>
                          <td>{vol}</td>
                        </tr>
                      ))}
                      <tr><td /><td /><td /><td /></tr>
                    </tbody>
                  </DailyTable>
                </DailyView>
                <Scroll thumb={87} />
                <Scroll horizontal thumb={87} />
              </DailyBox>
            </div>
          </Side>
        </Columns>

        <Recent>
          <RecentLabel><span>선택호가</span><span>(왼쪽부터 최근)</span></RecentLabel>
          <RecentGrid>
            <tbody>
              {[0, 1, 2].map(r => (
                <tr key={r}>{Array.from({ length: 14 }, (_, k) => <td key={k} />)}</tr>
              ))}
            </tbody>
          </RecentGrid>
          <Scroll thumb={100} />
        </Recent>
      </Body>
    </Window>
  );
}
